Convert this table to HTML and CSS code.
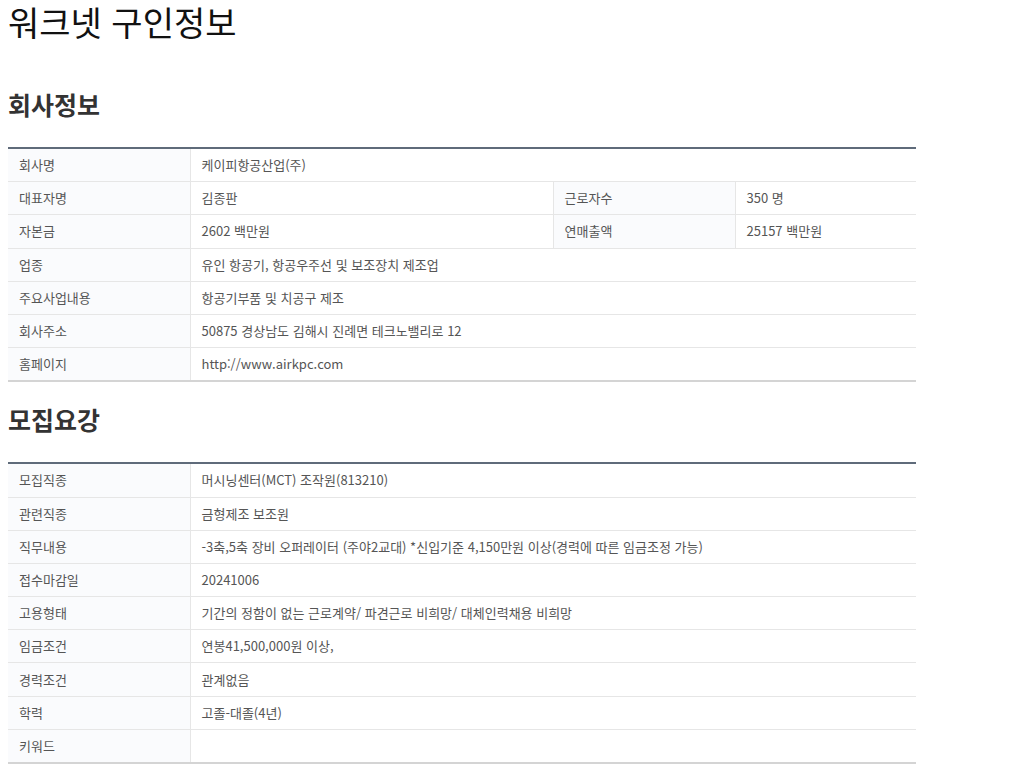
FILE: index.html
```html
<!DOCTYPE html>
<html lang="ko">
<head>
<meta charset="utf-8">
<title>워크넷 구인정보</title>
<link rel="stylesheet" href="styles.css">
</head>
<body>
<h1 class="page-title">워크넷 구인정보</h1>

<h2 class="section-title">회사정보</h2>
<table class="info-table">
  <colgroup><col class="c-label"><col class="c-value"><col class="c-label"><col class="c-value2"></colgroup>
  <tbody>
    <tr><th>회사명</th><td colspan="3">케이피항공산업(주)</td></tr>
    <tr><th>대표자명</th><td>김종판</td><th>근로자수</th><td>350 명</td></tr>
    <tr><th>자본금</th><td>2602 백만원</td><th>연매출액</th><td>25157 백만원</td></tr>
    <tr><th>업종</th><td colspan="3">유인 항공기, 항공우주선 및 보조장치 제조업</td></tr>
    <tr><th>주요사업내용</th><td colspan="3">항공기부품 및 치공구 제조</td></tr>
    <tr><th>회사주소</th><td colspan="3">50875 경상남도 김해시 진례면 테크노밸리로 12</td></tr>
    <tr><th>홈페이지</th><td colspan="3">http://www.airkpc.com</td></tr>
  </tbody>
</table>

<h2 class="section-title second">모집요강</h2>
<table class="info-table">
  <colgroup><col class="c-label"><col class="c-value"><col class="c-label"><col class="c-value2"></colgroup>
  <tbody>
    <tr><th>모집직종</th><td colspan="3">머시닝센터(MCT) 조작원(813210)</td></tr>
    <tr><th>관련직종</th><td colspan="3">금형제조 보조원</td></tr>
    <tr><th>직무내용</th><td colspan="3">-3축,5축 장비 오퍼레이터 (주야2교대) *신입기준 4,150만원 이상(경력에 따른 임금조정 가능)</td></tr>
    <tr><th>접수마감일</th><td colspan="3">20241006</td></tr>
    <tr><th>고용형태</th><td colspan="3">기간의 정함이 없는 근로계약/ 파견근로 비희망/ 대체인력채용 비희망</td></tr>
    <tr><th>임금조건</th><td colspan="3">연봉41,500,000원 이상,</td></tr>
    <tr><th>경력조건</th><td colspan="3">관계없음</td></tr>
    <tr><th>학력</th><td colspan="3">고졸-대졸(4년)</td></tr>
    <tr><th>키워드</th><td colspan="3"></td></tr>
  </tbody>
</table>
</body>
</html>
```

FILE: styles.css
```css
html, body {
  margin: 0;
  padding: 0;
  background: #ffffff;
}

body {
  padding: 0 8px;
  font-family: "Noto Sans CJK KR", "Noto Sans", sans-serif;
  color: #555555;
}

.page-title {
  margin: 0;
  font-size: 34px;
  line-height: 44px;
  font-weight: 400;
  color: #111111;
}

.section-title {
  margin: 44px 0 0;
  font-size: 25px;
  line-height: 32px;
  font-weight: 700;
  color: #333333;
}

.section-title.second {
  margin-top: 21px;
}

.info-table {
  width: 908px;
  margin-top: 27px;
  border-collapse: collapse;
  table-layout: fixed;
  border-top: 2px solid #5f6b7a;
  border-bottom: 2px solid #d4d4d4;
  font-size: 13px;
  letter-spacing: 0;
}

.c-label { width: 182px; }
.c-value { width: 363px; }
.c-value2 { width: 181px; }

.info-table th,
.info-table td {
  height: 32.2px;
  padding: 0 11px;
  text-align: left;
  font-weight: 400;
  color: #555555;
  border-top: 1px solid #e6e6e6;
  border-left: 1px solid #e6e6e6;
  vertical-align: middle;
  white-space: nowrap;
  line-height: 18px;
}

.info-table th {
  background: #fafbfd;
}

.info-table tr > :first-child {
  border-left: none;
}

.info-table tr:first-child > * {
  border-top: none;
}
```
